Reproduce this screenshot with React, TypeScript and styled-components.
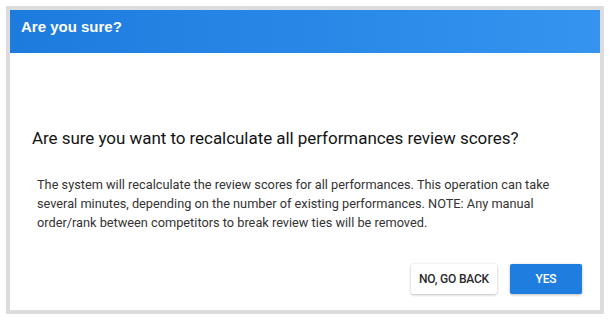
import styled, { createGlobalStyle } from "styled-components";

const GlobalStyle = createGlobalStyle`
    html, body {
        margin: 0;
        padding: 0;
        background: #ffffff;
    }
    * {
        box-sizing: border-box;
    }
`;

export default function App() {
    return (
        <>
            <GlobalStyle />
            <Frame>
                <Header>
                    <Title>Are you sure?</Title>
                </Header>
                <Content>
                    <Question>
                        Are sure you want to recalculate all performances review
                        scores?
                    </Question>
                    <Message>
                        The system will recalculate the review scores for all
                        performances. This operation can take several minutes,
                        depending on the number of existing performances. NOTE:
                        Any manual order/rank between competitors to break review
                        ties will be removed.
                    </Message>
                    <Actions>
                        <Button>NO, GO BACK</Button>
                        <Button $primary>YES</Button>
                    </Actions>
                </Content>
            </Frame>
        </>
    );
}

const Frame = styled.div`
    margin: 6px;
    width: 598px;
    height: 308px;
    border: 4px solid #dcdcdc;
    background: #ffffff;
    display: flex;
    flex-direction: column;
`;

const Header = styled.div`
    height: 43px;
    padding: 7px 11px;
    background: linear-gradient(90deg, #1d7bde 0%, #3494ef 100%);
`;

const Title = styled.h2`
    margin: 0;
    font-family: "Liberation Sans", Arial, sans-serif;
    font-size: 15px;
    font-weight: 700;
    line-height: 20px;
    color: #ffffff;
`;

const Content = styled.div`
    flex: 1;
    display: flex;
    flex-direction: column;
    padding: 75px 18px 0 22px;
    font-family: Roboto, "Noto Sans", sans-serif;
`;

const Question = styled.h3`
    margin: 0;
    font-size: 17px;
    font-weight: 400;
    line-height: 20px;
    color: #141414;
    letter-spacing: -0.05px;
`;

const Message = styled.p`
    margin: 27px 0 0 5px;
    font-size: 12.75px;
    line-height: 19px;
    color: #333333;
`;

const Actions = styled.div`
    display: flex;
    justify-content: flex-end;
    gap: 13px;
    margin-top: 32px;
`;

const Button = styled.button<{ $primary?: boolean }>`
    height: 30px;
    width: ${(p) => (p.$primary ? "72px" : "86px")};
    padding: 0;
    border: none;
    border-radius: 2px;
    font-family: Roboto, "Noto Sans", sans-serif;
    font-size: 12px;
    font-weight: 500;
    letter-spacing: -0.2px;
    text-transform: uppercase;
    cursor: pointer;
    background: ${(p) => (p.$primary ? "#1e7ddf" : "#ffffff")};
    color: ${(p) => (p.$primary ? "#ffffff" : "#2a2a2a")};
    box-shadow: 0 1px 3px rgba(0, 0, 0, 0.25), 0 0 1px rgba(0, 0, 0, 0.08);
`;
